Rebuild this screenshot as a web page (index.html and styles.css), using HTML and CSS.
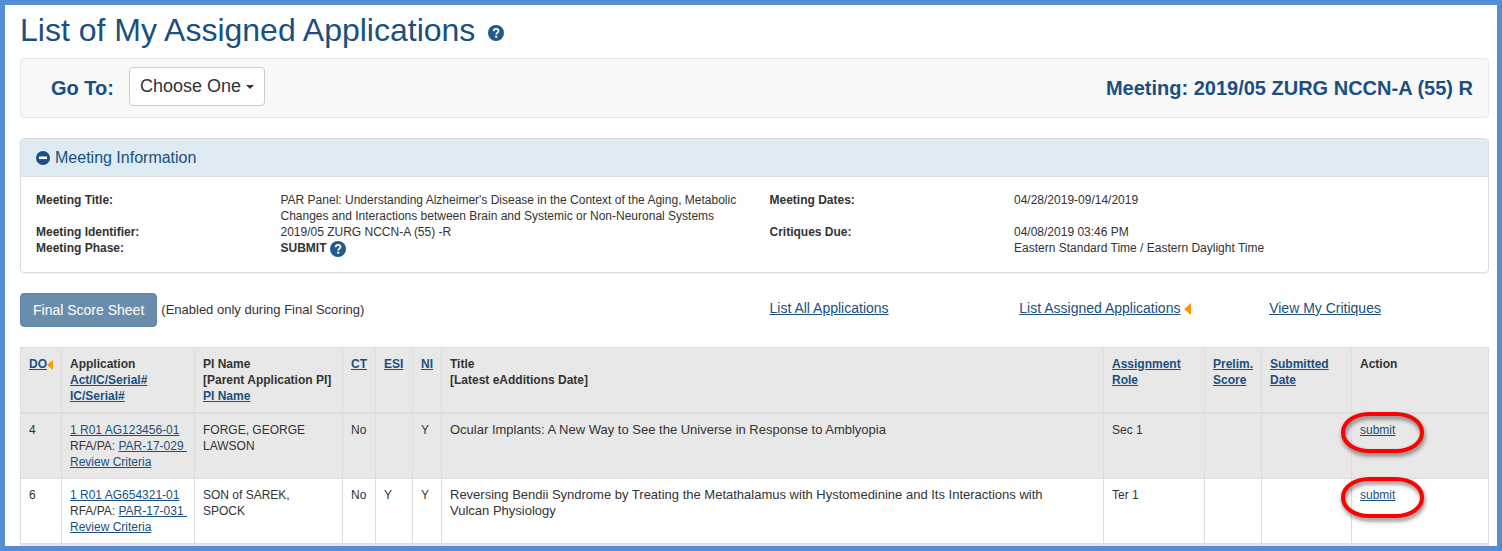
FILE: index.html
```html
<!DOCTYPE html>
<html lang="en">
<head>
  <meta charset="UTF-8">
  <title>List of My Assigned Applications</title>
  <link rel="stylesheet" href="styles.css">
</head>
<body>
  <svg class="defs" aria-hidden="true">
    <symbol id="help" viewBox="0 0 16 16">
      <circle cx="8" cy="8" r="8" fill="#225a8a"/>
      <path d="M5.700 6.200C5.700 4.600 6.700 3.800 8.100 3.800c1.400 0 2.400.8 2.400 2.100 0 1.700-2.300 1.700-2.300 3.600" fill="none" stroke="#fff" stroke-width="1.800"/>
      <rect x="7.200" y="10.700" width="2" height="2" fill="#fff"/>
    </symbol>
  </svg>

  <h1>List of My Assigned Applications <a href="#" class="help" aria-label="Help"><svg><use href="#help"/></svg></a></h1>

  <div class="well">
    <label for="goto">Go To:</label>
    <span class="select-wrap">
      <select id="goto">
        <option>Choose One</option>
      </select>
    </span>
    <span class="meeting">Meeting: 2019/05 ZURG NCCN-A (55) R</span>
  </div>

  <section class="panel">
    <h2>
      <svg viewBox="0 0 14 14"><circle cx="7" cy="7" r="7" fill="#1a4f80"/><rect x="3" y="5.500" width="8" height="2.600" fill="#fff"/></svg>
      Meeting Information
    </h2>
    <dl class="panel-body">
      <dt>Meeting Title:</dt>
      <dd>PAR Panel: Understanding Alzheimer's Disease in the Context of the Aging, Metabolic Changes and Interactions between Brain and Systemic or Non-Neuronal Systems</dd>
      <dt>Meeting Dates:</dt>
      <dd>04/28/2019-09/14/2019</dd>
      <dt>Meeting Identifier:<br>Meeting Phase:</dt>
      <dd>2019/05 ZURG NCCN-A (55) -R<br><b>SUBMIT</b> <a href="#" class="help" aria-label="Help"><svg><use href="#help"/></svg></a></dd>
      <dt>Critiques Due:</dt>
      <dd>04/08/2019 03:46 PM<br>Eastern Standard Time / Eastern Daylight Time</dd>
    </dl>
  </section>

  <div class="actions">
    <div class="score">
      <button type="button" disabled>Final Score Sheet</button>
      <span>(Enabled only during Final Scoring)</span>
    </div>
    <div><a href="#">List All Applications</a></div>
    <div><a href="#">List Assigned Applications</a> <i class="marker"></i></div>
    <div><a href="#">View My Critiques</a></div>
  </div>

  <table>
    <colgroup>
      <col class="c-do"><col class="c-app"><col class="c-pi"><col class="c-ct"><col class="c-esi"><col class="c-ni">
      <col><col class="c-role"><col class="c-score"><col class="c-date"><col class="c-action">
    </colgroup>
    <thead>
      <tr>
        <th><a href="#">DO</a><i class="marker"></i></th>
        <th>Application<br><a href="#">Act/IC/Serial#</a><br><a href="#">IC/Serial#</a></th>
        <th>PI Name<br>[Parent Application PI]<br><a href="#">PI Name</a></th>
        <th><a href="#">CT</a></th>
        <th><a href="#">ESI</a></th>
        <th><a href="#">NI</a></th>
        <th>Title<br>[Latest eAdditions Date]</th>
        <th><a href="#">Assignment<br>Role</a></th>
        <th><a href="#">Prelim.<br>Score</a></th>
        <th><a href="#">Submitted<br>Date</a></th>
        <th>Action</th>
      </tr>
    </thead>
    <tbody>
      <tr>
        <td>4</td>
        <td class="app"><a href="#">1 R01 AG123456-01</a><br>RFA/PA: <a href="#">PAR-17-029&nbsp;</a><br><a href="#">Review Criteria</a></td>
        <td>FORGE, GEORGE LAWSON</td>
        <td>No</td>
        <td></td>
        <td>Y</td>
        <td class="title">Ocular Implants: A New Way to See the Universe in Response to Amblyopia</td>
        <td>Sec 1</td>
        <td></td>
        <td></td>
        <td><a href="#" class="submit">submit</a></td>
      </tr>
      <tr>
        <td>6</td>
        <td class="app"><a href="#">1 R01 AG654321-01</a><br>RFA/PA: <a href="#">PAR-17-031&nbsp;</a><br><a href="#">Review Criteria</a></td>
        <td>SON of SAREK, SPOCK</td>
        <td>No</td>
        <td>Y</td>
        <td>Y</td>
        <td class="title">Reversing Bendii Syndrome by Treating the Metathalamus with Hystomedinine and Its Interactions with Vulcan Physiology</td>
        <td>Ter 1</td>
        <td></td>
        <td></td>
        <td><a href="#" class="submit">submit</a></td>
      </tr>
      <tr class="next">
        <td></td><td></td><td></td><td></td><td></td><td></td><td></td><td></td><td></td><td></td><td></td>
      </tr>
    </tbody>
  </table>
</body>
</html>
```
FILE: styles.css
```css
*,
*::before,
*::after {
  box-sizing: border-box;
}

html {
  overflow: hidden;
}

body {
  margin: 0;
  height: 100vh;
  overflow: hidden;
  padding: 8px 8px 0 15px;
  border: 5px solid #548dd4;
  background: #fff;
  color: #333;
  font-family: "Liberation Sans", Arial, sans-serif;
  font-size: 12px;
  line-height: 16px;
}

a {
  color: #1a4f80;
}

.defs {
  display: none;
}

h1 {
  margin: 0 0 10px;
  color: #1a4f80;
  font-size: 32px;
  font-weight: normal;
  line-height: 35px;
}

.help svg {
  width: 16px;
  height: 16px;
  vertical-align: middle;
}

h1 .help svg {
  margin-left: 4px;
}

.well {
  display: flex;
  align-items: center;
  height: 60px;
  padding: 0 15px 0 30px;
  margin-bottom: 20px;
  border: 1px solid #e7e7e7;
  border-radius: 4px;
  background: #f8f8f8;
  color: #1a4f80;
  font-size: 20px;
  font-weight: bold;
}

.select-wrap {
  position: relative;
  margin: 0 0 4px 15px;
}

.select-wrap::after {
  content: "";
  position: absolute;
  right: 11px;
  top: 18px;
  border: 4px solid transparent;
  border-top-color: #333;
  border-bottom: 0;
  pointer-events: none;
}

select {
  appearance: none;
  display: block;
  width: 136px;
  height: 39px;
  padding: 0 20px 0 10px;
  border: 1px solid #ccc;
  border-radius: 4px;
  background: #fff;
  color: #333;
  font-family: inherit;
  font-size: 18px;
}

.meeting {
  margin-left: auto;
}

.panel {
  margin-bottom: 20px;
  border: 1px solid #ddd;
  border-radius: 4px;
  box-shadow: 0 1px 1px rgba(0, 0, 0, 0.05);
}

.panel h2 {
  display: flex;
  align-items: center;
  gap: 5px;
  margin: 0;
  padding: 10px 15px 9px;
  border-bottom: 1px solid #ddd;
  border-radius: 3px 3px 0 0;
  background: #deebf3;
  color: #1a4f80;
  font-size: 16px;
  font-weight: normal;
  line-height: 18px;
}

.panel h2 svg {
  width: 14px;
  height: 14px;
}

.panel-body {
  display: grid;
  grid-template-columns: 2fr 4fr 2fr 4fr;
  margin: 0;
  padding: 15px 0 16px;
}

dt,
dd {
  margin: 0;
  padding: 0 15px;
}

dt {
  font-weight: bold;
}

dd .help svg {
  margin-top: -2px;
  margin-bottom: -2px;
}

.actions {
  display: grid;
  grid-template-columns: 3fr 1fr 1fr 1fr;
  margin: 0 -15px 20px;
  font-size: 14px;
}

.actions > div {
  padding: 7px 0 0 15px;
  white-space: nowrap;
}

.actions .score {
  display: flex;
  align-items: center;
  gap: 4px;
  padding-top: 0;
  font-size: 13px;
}

button {
  height: 34px;
  padding: 0 12px;
  border: 1px solid #6285a8;
  border-radius: 4px;
  background: #6a8cad;
  color: #fff;
  font-family: inherit;
  font-size: 14px;
}

.marker {
  display: inline-block;
  border: 6px solid transparent;
  border-right: 7px solid #f90;
  border-left: 0;
  vertical-align: middle;
}

th .marker {
  border-width: 5px 6px 5px 0;
}

table {
  width: 100%;
  table-layout: fixed;
  border-collapse: collapse;
}

th,
td {
  height: 65px;
  padding: 8px;
  border: 1px solid #ddd;
  text-align: left;
  vertical-align: top;
}

thead tr,
tbody tr:nth-child(odd) {
  background: #e8e8e8;
}

th {
  border-bottom-width: 2px;
  white-space: nowrap;
}

.c-do { width: 41px; }
.c-app { width: 133px; }
.c-pi { width: 148px; }
.c-ct { width: 33px; }
.c-esi { width: 37px; }
.c-ni { width: 29px; }
.c-role { width: 101px; }
.c-score { width: 57px; }
.c-date { width: 90px; }
.c-action { width: 137px; }

.app {
  white-space: nowrap;
}

.title {
  padding-right: 40px;
  font-size: 13px;
}

.next td {
  height: 2px;
  padding: 1px 0 0;
  border-bottom: 0;
}

.submit {
  position: relative;
}

.submit::before {
  content: "";
  position: absolute;
  left: -19px;
  top: -11px;
  width: 83px;
  height: 41px;
  border: 4px solid #f00;
  border-radius: 28px / 20px;
  filter: drop-shadow(1px 3px 2px rgba(0, 0, 0, 0.5));
}
```
